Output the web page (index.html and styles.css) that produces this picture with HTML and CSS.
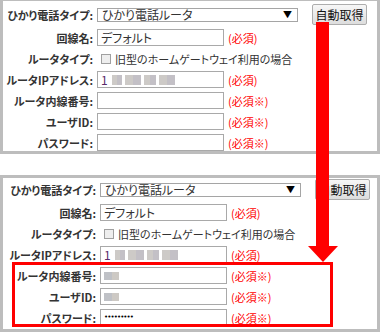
FILE: index.html
```html
<!DOCTYPE html>
<html lang="ja">
<head>
  <meta charset="UTF-8">
  <title>ひかり電話ルータ設定</title>
  <link rel="stylesheet" href="styles.css">
</head>
<body>
  <div class="page">

    <div class="panel panel-top">
      <div class="row row-head">
        <span class="lbl">ひかり電話タイプ:</span>
        <div class="select">ひかり電話ルータ<span class="caret">▼</span></div>
        <button class="btn">自動取得</button>
      </div>
      <div class="row">
        <span class="lbl">回線名:</span>
        <div class="field">デフォルト</div>
        <span class="req">(必須)</span>
      </div>
      <div class="row">
        <span class="lbl">ルータタイプ:</span>
        <span class="check"></span>
        <span class="opt">旧型のホームゲートウェイ利用の場合</span>
      </div>
      <div class="row">
        <span class="lbl">ルータIPアドレス:</span>
        <div class="field"><span class="ip">1</span><span class="blur w10"></span><span class="blur w16"></span><span class="blur w12"></span><span class="blur w16"></span></div>
        <span class="req">(必須)</span>
      </div>
      <div class="row">
        <span class="lbl">ルータ内線番号:</span>
        <div class="field"></div>
        <span class="req">(必須※)</span>
      </div>
      <div class="row">
        <span class="lbl">ユーザID:</span>
        <div class="field"></div>
        <span class="req">(必須※)</span>
      </div>
      <div class="row">
        <span class="lbl">パスワード:</span>
        <div class="field"></div>
        <span class="req">(必須※)</span>
      </div>
    </div>

    <div class="panel panel-bottom">
      <div class="row row-head">
        <span class="lbl">ひかり電話タイプ:</span>
        <div class="select">ひかり電話ルータ<span class="caret">▼</span></div>
        <button class="btn">自動取得</button>
      </div>
      <div class="row">
        <span class="lbl">回線名:</span>
        <div class="field">デフォルト</div>
        <span class="req">(必須)</span>
      </div>
      <div class="row">
        <span class="lbl">ルータタイプ:</span>
        <span class="check"></span>
        <span class="opt">旧型のホームゲートウェイ利用の場合</span>
      </div>
      <div class="row">
        <span class="lbl">ルータIPアドレス:</span>
        <div class="field"><span class="ip">1</span><span class="blur w10"></span><span class="blur w16"></span><span class="blur w12"></span><span class="blur w16"></span></div>
        <span class="req">(必須)</span>
      </div>
      <div class="row">
        <span class="lbl">ルータ内線番号:</span>
        <div class="field"><span class="blur small"></span></div>
        <span class="req">(必須※)</span>
      </div>
      <div class="row">
        <span class="lbl">ユーザID:</span>
        <div class="field"><span class="blur small"></span></div>
        <span class="req">(必須※)</span>
      </div>
      <div class="row">
        <span class="lbl">パスワード:</span>
        <div class="field"><span class="dots">•••••••••</span></div>
        <span class="req">(必須※)</span>
      </div>
    </div>

    <!-- 注釈: 矢印と枠 -->
    <svg class="arrow" width="30" height="240" viewBox="0 0 30 240">
      <rect x="8" y="0" width="13" height="225" fill="#ff0000"/>
      <polygon points="0,224 30,224 15,240" fill="#ff0000"/>
    </svg>
    <div class="highlight"></div>

  </div>
</body>
</html>
```

FILE: styles.css
```css
body {
  margin: 0;
  background: #fff;
  font-family: "Noto Sans CJK JP", "Noto Sans", sans-serif;
  color: #222;
}
.page {
  position: relative;
  width: 382px;
  height: 332px;
  overflow: hidden;
}
.panel {
  box-sizing: border-box;
  width: 380px;
  border: 3px solid #bdbdbd;
  display: flex;
  flex-direction: column;
  gap: 4px;
}
.panel-top {
  border-top-width: 1px;
  padding: 3px 0 0 0;
}
.panel-bottom {
  margin-top: 21px;
  padding: 1px 0 3px 3px;
}
.row {
  display: flex;
  align-items: center;
  height: 17px;
}
.row-head {
  height: 21px;
}
.lbl {
  width: 90px;
  margin-right: 4px;
  text-align: right;
  font-weight: bold;
  font-size: 11px;
  line-height: 14px;
  white-space: nowrap;
  font-feature-settings: "palt";
  color: #333;
}
.select {
  box-sizing: border-box;
  width: 201px;
  height: 14px;
  border: 1px solid #a5a5a5;
  padding: 0 5px 0 4px;
  display: flex;
  align-items: center;
  justify-content: space-between;
  font-size: 12px;
  line-height: 12px;
  color: #333;
  font-feature-settings: "palt";
}
.caret {
  font-size: 9px;
  color: #000;
}
.btn {
  box-sizing: border-box;
  margin-left: 14px;
  width: 55px;
  height: 21px;
  padding: 0;
  border: 1px solid #adadad;
  border-radius: 2px;
  background: linear-gradient(#f7f7f7, #dddddd);
  font-family: inherit;
  font-size: 12px;
  line-height: 19px;
  color: #111;
}
.field {
  box-sizing: border-box;
  width: 127px;
  height: 17px;
  border: 1px solid #a9a9a9;
  padding-left: 3px;
  display: flex;
  align-items: center;
  gap: 3px;
  font-size: 12px;
  line-height: 15px;
  color: #333;
  font-feature-settings: "palt";
}
.req {
  margin-left: 4px;
  font-size: 11px;
  color: #ff0000;
  white-space: nowrap;
}
.check {
  box-sizing: border-box;
  width: 10px;
  height: 10px;
  margin-left: 4px;
  border: 1px solid #a0a0a0;
  background: #eee;
}
.opt {
  margin-left: 4px;
  font-size: 11px;
  color: #333;
  white-space: nowrap;
  font-feature-settings: "palt";
}
.ip {
  color: #5a2a6a;
  margin-right: 1px;
}
.blur {
  display: inline-block;
  height: 10px;
  background: linear-gradient(90deg, #cdcac7 0 50%, #c3c0c6 50%);
}
.w10 { width: 10px; }
.w12 { width: 12px; }
.w16 { width: 16px; }
.blur.small {
  width: 15px;
  height: 8px;
  background: linear-gradient(90deg, #bfc1c6 0 50%, #cdc9c4 50%);
}
.dots {
  font-family: "DejaVu Sans", sans-serif;
  font-size: 7px;
  letter-spacing: -0.9px;
  color: #000;
}
.arrow {
  position: absolute;
  left: 308px;
  top: 22px;
}
.highlight {
  position: absolute;
  left: 12px;
  top: 262px;
  width: 321px;
  height: 65px;
  box-sizing: border-box;
  border: 3px solid #ff0000;
}
```
